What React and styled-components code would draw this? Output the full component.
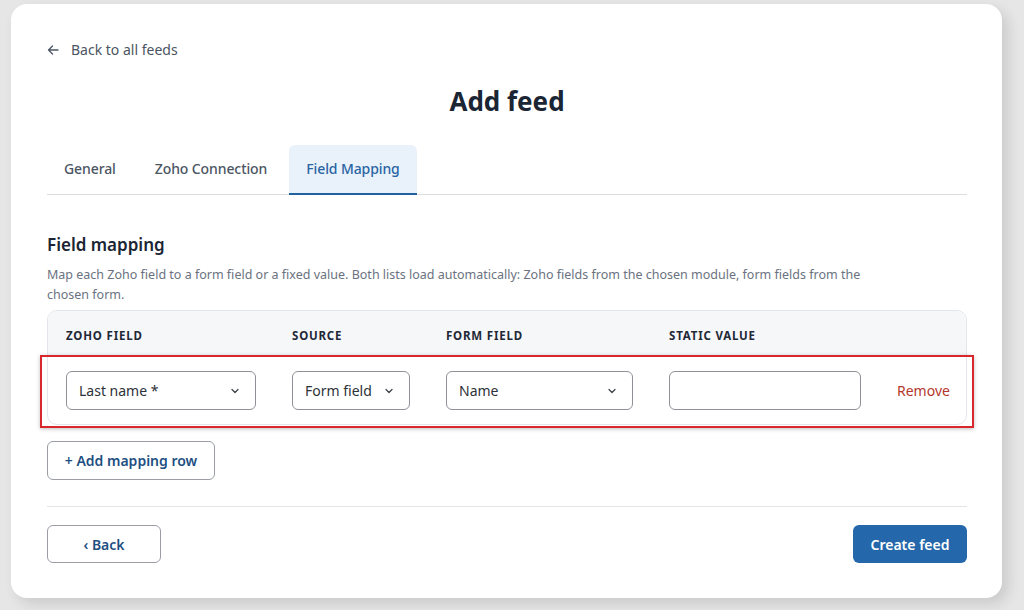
import React, { useState } from "react";
import styled, { createGlobalStyle } from "styled-components";

const GlobalStyle = createGlobalStyle`
  html, body {
    margin: 0;
    padding: 0;
    background: #e6e6e6;
    font-family: "Noto Sans", "Open Sans", Arial, sans-serif;
    color: #1f2937;
  }
  * {
    box-sizing: border-box;
  }
`;

const Page = styled.div`
  padding: 4px 22px 12px 11px;
`;

const Card = styled.div`
  background: #ffffff;
  border-radius: 16px;
  box-shadow: 6px 6px 14px rgba(0, 0, 0, 0.12);
  padding: 36px 35px 35px 36px;
  display: flex;
  flex-direction: column;
`;

const BackLink = styled.a`
  display: inline-flex;
  align-items: center;
  gap: 12px;
  align-self: flex-start;
  font-size: 14px;
  line-height: 20px;
  color: #4b5563;
  text-decoration: none;
  cursor: pointer;
`;

const Title = styled.h1`
  margin: 24px 0 0;
  text-align: center;
  font-size: 26px;
  line-height: 34px;
  font-weight: 700;
  color: #1b2533;
`;

const Tabs = styled.div`
  margin-top: 27px;
  display: flex;
  gap: 5px;
  border-bottom: 1px solid #dddddd;
`;

const Tab = styled.button`
  height: 50px;
  padding: 0 17px 2px;
  border: none;
  border-bottom: 2px solid ${(p) => (p.active ? "#21619f" : "transparent")};
  margin-bottom: -1px;
  border-radius: 6px 6px 0 0;
  background: ${(p) => (p.active ? "#e9f2fb" : "transparent")};
  color: ${(p) => (p.active ? "#2a64a3" : "#4b5563")};
  font-family: inherit;
  font-size: 14px;
  font-weight: 500;
  letter-spacing: -0.1px;
  cursor: pointer;
`;

const SectionTitle = styled.h2`
  margin: 38px 0 0;
  font-size: 17px;
  line-height: 24px;
  font-weight: 600;
  color: #1b2533;
`;

const Description = styled.p`
  margin: 8px 0 0;
  max-width: 830px;
  font-size: 12.5px;
  line-height: 20px;
  color: #6b7280;
`;

const Table = styled.div`
  margin-top: 5px;
  border: 1px solid #e3e6ea;
  border-radius: 10px;
`;

const Grid = styled.div`
  display: grid;
  grid-template-columns: 190px 118px 187px 192px auto;
  column-gap: 36px;
  align-items: center;
  padding: 0 18px;
`;

const HeadRow = styled(Grid)`
  height: 44px;
  padding-top: 4px;
  background: #f6f7f9;
  border-radius: 10px 10px 0 0;
`;

const HeadCell = styled.div`
  font-size: 11.5px;
  font-weight: 700;
  letter-spacing: 0.8px;
  text-transform: uppercase;
  color: #1f2937;
`;

const BodyRow = styled(Grid)`
  position: relative;
  height: 69px;
  padding-top: 2px;
`;

const Highlight = styled.div`
  position: absolute;
  top: 0;
  left: -8px;
  right: -8px;
  bottom: -4px;
  border: 2px solid #d9272e;
  box-shadow: 0 1px 4px rgba(0, 0, 0, 0.25);
  pointer-events: none;
`;

const SelectBox = styled.div`
  height: 39px;
  border: 1px solid #8e9196;
  border-radius: 6px;
  display: flex;
  align-items: center;
  justify-content: space-between;
  padding: 0 15px 0 12px;
  font-size: 14px;
  color: #2d3239;
  background: #fff;
`;

const TextInput = styled.input`
  height: 39px;
  width: 100%;
  border: 1px solid #8e9196;
  border-radius: 6px;
  padding: 0 12px;
  font-family: inherit;
  font-size: 14px;
`;

const RemoveButton = styled.button`
  border: none;
  background: none;
  padding: 0;
  justify-self: start;
  font-family: inherit;
  font-size: 14px;
  color: #b3372d;
  cursor: pointer;
`;

const OutlineButton = styled.button`
  height: 38px;
  width: 114px;
  padding: 0;
  border: 1px solid #9a9ea4;
  border-radius: 6px;
  background: #fff;
  color: #1e4f82;
  font-family: inherit;
  font-size: 14px;
  font-weight: 600;
  white-space: nowrap;
  cursor: pointer;
`;

const AddRowButton = styled(OutlineButton)`
  margin-top: 16px;
  align-self: flex-start;
  height: 39px;
  width: 168px;
`;

const Divider = styled.hr`
  margin: 26px 0 0;
  border: none;
  border-top: 1px solid #e2e4e7;
`;

const Footer = styled.div`
  margin-top: 18px;
  display: flex;
  justify-content: space-between;
`;

const PrimaryButton = styled.button`
  height: 38px;
  width: 114px;
  border: none;
  border-radius: 6px;
  background: #2467aa;
  color: #fff;
  font-family: inherit;
  font-size: 14px;
  font-weight: 600;
  cursor: pointer;
`;

function Chevron() {
  return (
    <svg width="10" height="10" viewBox="0 0 10 10" fill="none">
      <path d="M2 3.5 L5 6.5 L8 3.5" stroke="#3a3f45" strokeWidth="1.2" strokeLinecap="round" strokeLinejoin="round" />
    </svg>
  );
}

function ArrowLeft() {
  return (
    <svg width="12" height="12" viewBox="0 0 12 12" fill="none">
      <path d="M11 6 H1.5 M5.5 2 L1.5 6 L5.5 10" stroke="#4b5563" strokeWidth="1.3" strokeLinecap="round" strokeLinejoin="round" />
    </svg>
  );
}

function Select({ value }) {
  return (
    <SelectBox>
      <span>{value}</span>
      <Chevron />
    </SelectBox>
  );
}

const tabs = ["General", "Zoho Connection", "Field Mapping"];

export default function App() {
  const [active, setActive] = useState("Field Mapping");

  return (
    <Page>
      <GlobalStyle />
      <Card>
        <BackLink>
          <ArrowLeft />
          Back to all feeds
        </BackLink>
        <Title>Add feed</Title>
        <Tabs>
          {tabs.map((t) => (
            <Tab key={t} active={t === active} onClick={() => setActive(t)}>
              {t}
            </Tab>
          ))}
        </Tabs>

        <SectionTitle>Field mapping</SectionTitle>
        <Description>
          Map each Zoho field to a form field or a fixed value. Both lists load automatically: Zoho fields from the
          chosen module, form fields from the chosen form.
        </Description>

        <Table>
          <HeadRow>
            <HeadCell>Zoho field</HeadCell>
            <HeadCell>Source</HeadCell>
            <HeadCell>Form field</HeadCell>
            <HeadCell>Static value</HeadCell>
            <span />
          </HeadRow>
          <BodyRow>
            <Select value="Last name *" />
            <Select value="Form field" />
            <Select value="Name" />
            <TextInput />
            <RemoveButton>Remove</RemoveButton>
            <Highlight />
          </BodyRow>
        </Table>

        <AddRowButton>+ Add mapping row</AddRowButton>
        <Divider />
        <Footer>
          <OutlineButton>‹ Back</OutlineButton>
          <PrimaryButton>Create feed</PrimaryButton>
        </Footer>
      </Card>
    </Page>
  );
}
